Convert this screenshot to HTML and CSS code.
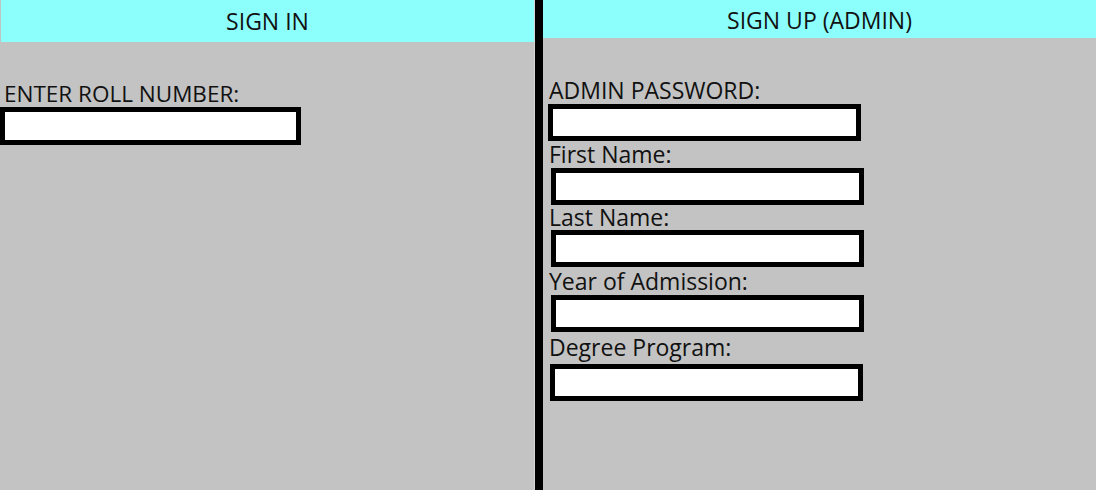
FILE: index.html
```html
<!DOCTYPE html>
<html>
<head>
<meta charset="utf-8">
<link rel="stylesheet" href="styles.css">
</head>
<body>
<div class="page">
  <section class="panel panel-left">
    <div class="head head-left">SIGN IN</div>
    <div class="form form-left">
      <label class="lbl">ENTER ROLL NUMBER:</label>
      <input class="box box-left" type="text">
    </div>
  </section>
  <div class="divider"></div>
  <section class="panel panel-right">
    <div class="head head-right">SIGN UP (ADMIN)</div>
    <div class="form form-right">
      <label class="lbl">ADMIN PASSWORD:</label>
      <input class="box box-right box-first" type="password">
      <label class="lbl">First Name:</label>
      <input class="box box-right" type="text">
      <label class="lbl lbl-short">Last Name:</label>
      <input class="box box-right" type="text">
      <label class="lbl lbl-mid">Year of Admission:</label>
      <input class="box box-right" type="text">
      <label class="lbl lbl-tall">Degree Program:</label>
      <input class="box box-right box-last" type="text">
    </div>
  </section>
</div>
</body>
</html>
```
FILE: styles.css
```css
html, body {
  margin: 0;
  padding: 0;
  background: #ffffff;
}
body {
  font-family: "Open Sans", "Noto Sans", sans-serif;
  color: #111111;
}
.page {
  display: flex;
  width: 1096px;
  height: 490px;
}
.panel {
  background: #c3c3c3;
  display: flex;
  flex-direction: column;
}
.panel-left {
  width: 534px;
  flex: 0 0 534px;
}
.divider {
  flex: 0 0 9px;
  box-sizing: border-box;
  width: 9px;
  height: 492px;
  background: #000000;
  border-left: 1px solid #d4d4d4;
}
.panel-right {
  flex: 1 1 auto;
}
.head {
  background: #8cfffc;
  font-size: 23px;
  text-align: center;
}
.head-left {
  height: 42px;
  line-height: 42px;
  margin-left: 1px;
}
.head-right {
  height: 38px;
  line-height: 40px;
}
.form {
  display: flex;
  flex-direction: column;
  align-items: flex-start;
}
.form-left {
  padding-top: 38px;
}
.form-right {
  padding-top: 39px;
}
.lbl {
  display: block;
  box-sizing: border-box;
  font-size: 22.5px;
  line-height: 27px;
  height: 27px;
  padding-left: 4px;
  white-space: nowrap;
}
.form-right .lbl {
  padding-left: 6px;
  font-size: 23px;
}
.lbl-short {
  height: 25px;
  line-height: 25px;
}
.lbl-mid {
  height: 28px;
  padding-top: 1px;
}
.lbl-tall {
  height: 32px;
  padding-top: 2px;
}
.box {
  display: block;
  box-sizing: border-box;
  border: 5px solid #000000;
  background: #ffffff;
  margin: 0;
  padding: 0;
  outline: none;
}
.box-left {
  width: 301px;
  height: 38px;
}
.box-right {
  width: 313px;
  height: 37px;
  margin-left: 8px;
}
.box-first {
  margin-left: 5px;
}
.box-last {
  margin-left: 7px;
}
```
